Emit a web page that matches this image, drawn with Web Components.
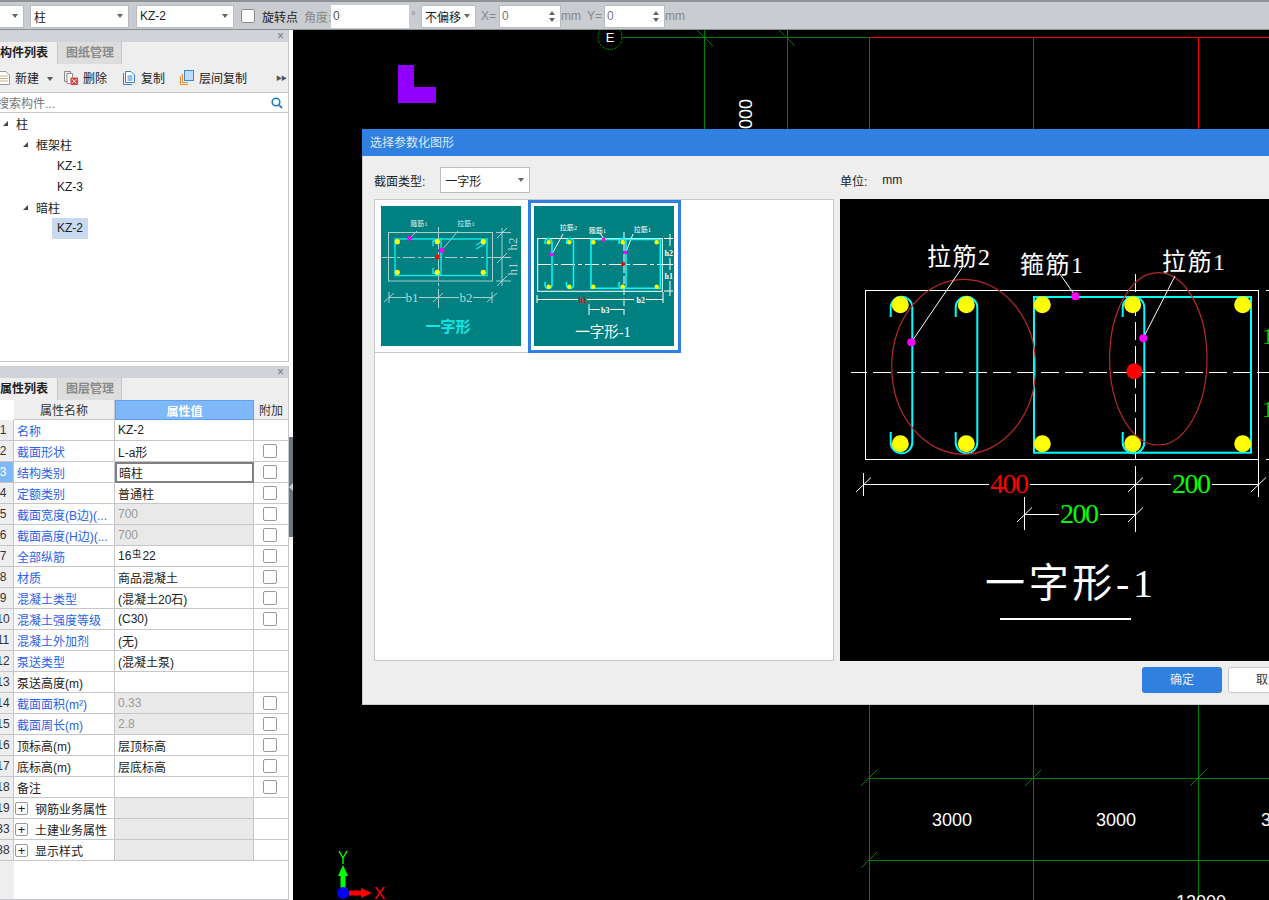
<!DOCTYPE html>
<html lang="zh">
<head>
<meta charset="utf-8">
<title>选择参数化图形</title>
<style>
    html, body {
        margin: 0;
        height: 900px;
        overflow: hidden;
        background: #000;
        font: 12px "Liberation Sans", "Noto Sans CJK SC", sans-serif;
        color: #222;
    }
    cad-app { height: 900px; }
</style>
</head>
<body>
<cad-app></cad-app>

<script>
const FONT = '"Liberation Sans", "Noto Sans CJK SC", sans-serif';
const SERIF = '"Liberation Serif", "Noto Sans CJK SC", serif';

class CadSelect extends HTMLElement {
    constructor() {
        super();
        const shadow = this.attachShadow({mode: 'open'});
        shadow.innerHTML = `
            <style>
                :host {
                    display: flex;
                    align-items: center;
                    justify-content: space-between;
                    box-sizing: border-box;
                    height: 23px;
                    padding: 0 5px 0 3px;
                    background: #fff;
                    border: 1px solid #b9bbbe;
                    font-size: 12px;
                    color: #222;
                }
                i {
                    border: 3px solid transparent;
                    border-top: 4px solid #666;
                    border-bottom: 0;
                }
            </style>
            <span><slot></slot></span><i></i>
        `;
    }
}
customElements.define('cad-select', CadSelect);

class CadSpin extends HTMLElement {
    constructor() {
        super();
        const shadow = this.attachShadow({mode: 'open'});
        shadow.innerHTML = `
            <style>
                :host {
                    display: flex;
                    align-items: center;
                    justify-content: space-between;
                    box-sizing: border-box;
                    height: 23px;
                    padding: 0 5px 0 2px;
                    background: #fff;
                    border: 1px solid #b9bbbe;
                    color: #777;
                }
                div { display: grid; gap: 3px; }
                i { display: block; border: 3px solid transparent; border-top: 0; border-bottom: 4px solid #666; }
                i + i { border-bottom: 0; border-top: 4px solid #666; }
            </style>
            <span><slot></slot></span><div><i></i><i></i></div>
        `;
    }
}
customElements.define('cad-spin', CadSpin);

class TopBar extends HTMLElement {
    constructor() {
        super();
        const shadow = this.attachShadow({mode: 'open'});
        shadow.innerHTML = `
            <style>
                :host {
                    display: flex;
                    align-items: center;
                    box-sizing: border-box;
                    height: 30px;
                    padding-top: 1px;
                    background: #c9ccd1;
                    border-top: 2px solid #8f9297;
                    border-bottom: 1px solid #8a8d91;
                    font-size: 12px;
                    color: #888;
                    overflow: hidden;
                    white-space: nowrap;
                }
                .check {
                    box-sizing: border-box;
                    width: 14px;
                    height: 14px;
                    margin: 0 7px 0 7px;
                    background: #fff;
                    border: 1px solid #8c8c8c;
                    border-radius: 2px;
                }
                .dark { color: #222; }
                .angle {
                    box-sizing: border-box;
                    flex: none;
                    width: 78px;
                    height: 23px;
                    padding: 4px 2px;
                    background: #fff;
                    color: #555;
                }
                .label { flex: none; }
            </style>
            <cad-select style="width:34px;margin-left:-10px"></cad-select>
            <cad-select style="width:99px;margin-left:6px">柱</cad-select>
            <cad-select style="width:98px;margin-left:7px">KZ-2</cad-select>
            <div class="check"></div>
            <span class="dark label" style="width:36px">旋转点</span>
            <span class="label" style="margin-left:6px;width:27px">角度:</span>
            <div class="angle">0</div>
            <span class="label" style="margin-left:2px;width:10px">°</span>
            <cad-select style="width:55px">不偏移</cad-select>
            <span class="label" style="margin-left:5px;width:18px">X=</span>
            <cad-spin style="width:62px">0</cad-spin>
            <span class="label" style="width:26px">mm</span>
            <span class="label" style="width:17px">Y=</span>
            <cad-spin style="width:61px">0</cad-spin>
            <span class="label">mm</span>
        `;
    }
}
customElements.define('top-bar', TopBar);

class SidePanel extends HTMLElement {
    constructor() {
        super();
        const shadow = this.attachShadow({mode: 'open'});
        shadow.innerHTML = `
            <style>
                :host {
                    display: flex;
                    flex-direction: column;
                    box-sizing: border-box;
                    background: #fff;
                    border-right: 1px solid #c4c6c9;
                    border-bottom: 1px solid #c4c6c9;
                    overflow: hidden;
                }
                .head {
                    display: flex;
                    justify-content: flex-end;
                    align-items: center;
                    flex: none;
                    height: 12px;
                    padding-right: 4px;
                    background: #d0d3d8;
                    color: #777;
                    font-size: 12px;
                    line-height: 12px;
                }
                .tabs {
                    display: flex;
                    flex: none;
                    height: 22px;
                    background: #eee;
                    font-weight: bold;
                    line-height: 23px;
                }
                .tabs span { box-sizing: border-box; width: 57px; color: #222; }
                .tabs span + span {
                    width: 65px;
                    padding-left: 8px;
                    background: #ddd;
                    border-left: 1px solid #c8c8c8;
                    border-right: 1px solid #c8c8c8;
                    color: #8a8a8a;
                }
            </style>
            <div class="head">×</div>
            <div class="tabs"><span id="a"></span><span id="b"></span></div>
            <slot></slot>
        `;
        shadow.getElementById('a').textContent = this.getAttribute('first');
        shadow.getElementById('b').textContent = this.getAttribute('second');
    }
}
customElements.define('side-panel', SidePanel);

class PartTools extends HTMLElement {
    constructor() {
        super();
        const shadow = this.attachShadow({mode: 'open'});
        shadow.innerHTML = `
            <style>
                :host {
                    display: flex;
                    align-items: center;
                    flex: none;
                    box-sizing: border-box;
                    height: 29px;
                    padding-bottom: 1px;
                    background: #eee;
                    border-bottom: 1px solid #c8c8c8;
                    color: #222;
                    white-space: nowrap;
                }
                svg { display: block; flex: none; }
                .drop { flex: none; border: 3px solid transparent; border-top: 4px solid #555; border-bottom: 0; margin: 2px 0 0 8px; }
                .more { margin-left: auto; margin-right: 2px; color: #555; font-size: 6px; letter-spacing: -1px; }
            </style>
            <svg width="11" height="14" viewBox="0 0 11 14" style="margin-left:-1px">
                <path d="M0 .5H7L10.5 4V13.5H0Z" fill="#fff" stroke="#999"/>
                <path d="M1 5H9M1 7.5H9M1 10H9" stroke="#c8b27a"/>
            </svg>
            <span style="margin-left:5px">新建</span>
            <i class="drop"></i>
            <svg width="14" height="14" viewBox="0 0 14 14" style="margin-left:11px">
                <path d="M.5 .5H6.5V2.5M.5 .5V10.5H3" fill="none" stroke="#8a8a8a"/>
                <path d="M3 2.5H8.5V6.5M3 2.5V12.5H6" fill="#fff" stroke="#8a8a8a"/>
                <rect x="6.5" y="6.5" width="7.5" height="7.5" fill="#d84a4a"/>
                <path d="M8.3 8.3L12.2 12.2M12.2 8.3L8.3 12.2" stroke="#fff"/>
            </svg>
            <span style="margin-left:5px">删除</span>
            <svg width="12" height="14" viewBox="0 0 12 14" style="margin-left:16px">
                <path d="M.5 2V13.5H9" fill="none" stroke="#3580d0"/>
                <path d="M2.5 .5H8L11.5 4V11.5H2.5Z" fill="#fff" stroke="#3580d0"/>
                <path d="M4.5 5H9.5M4.5 7H9.5M4.5 9H9.5" stroke="#3580d0"/>
            </svg>
            <span style="margin-left:6px">复制</span>
            <svg width="14" height="15" viewBox="0 0 14 15" style="margin-left:15px">
                <path d="M.5 6V14.5H8M2.5 4V12.5H8" fill="none" stroke="#e88a30"/>
                <rect x="4.5" y=".5" width="9" height="10" fill="#bcdcfa" stroke="#3a88d8"/>
            </svg>
            <span style="margin-left:5px">层间复制</span>
            <span class="more">▶▶</span>
        `;
    }
}
customElements.define('part-tools', PartTools);

class PartSearch extends HTMLElement {
    constructor() {
        super();
        const shadow = this.attachShadow({mode: 'open'});
        shadow.innerHTML = `
            <style>
                :host {
                    display: flex;
                    align-items: center;
                    justify-content: space-between;
                    flex: none;
                    box-sizing: border-box;
                    height: 20px;
                    padding-right: 5px;
                    border-bottom: 1px solid #c8c8c8;
                    color: #777;
                    overflow: hidden;
                }
                span { margin-left: -3px; }
            </style>
            <span>搜索构件...</span>
            <svg width="12" height="12" viewBox="0 0 12 12">
                <circle cx="5" cy="5" r="3.8" fill="none" stroke="#1f7fc4" stroke-width="1.6"/>
                <path d="M7.8 7.8L11 11" stroke="#1f7fc4" stroke-width="1.8"/>
            </svg>
        `;
    }
}
customElements.define('part-search', PartSearch);

class PartTree extends HTMLElement {
    constructor() {
        super();
        const shadow = this.attachShadow({mode: 'open'});
        const rows = [
            [0, '柱', true], [1, '框架柱', true], [2, 'KZ-1'], [2, 'KZ-3'],
            [1, '暗柱', true], [2, 'KZ-2', false, true],
        ];
        shadow.innerHTML = `
            <style>
                :host { display: block; flex: 1; color: #222; }
                .row { display: flex; align-items: center; height: 21px; }
                .row i {
                    flex: none;
                    width: 0;
                    height: 0;
                    margin-right: 8px;
                    border-left: 5px solid transparent;
                    border-bottom: 5px solid #444;
                }
                .selected { height: 21px; line-height: 21px; padding: 0 5px; margin-left: -5px; background: #c8d9f0; }
            </style>
            ${rows.map(([depth, name, open, selected]) => `
                <div class="row" style="padding-left:${open ? 3 + depth * 20 : 57}px">
                    ${open ? '<i></i>' : ''}
                    <span class="${selected ? 'selected' : ''}">${name}</span>
                </div>
            `).join('')}
        `;
    }
}
customElements.define('part-tree', PartTree);

class PropTable extends HTMLElement {
    constructor() {
        super();
        const shadow = this.attachShadow({mode: 'open'});
        // no, name, value, flags: b blue, c checkbox, d disabled, s selected, x expander
        const rows = [
            [1, '名称', 'KZ-2', 'b'],
            [2, '截面形状', 'L-a形', 'bc'],
            [3, '结构类别', '暗柱', 'bcs'],
            [4, '定额类别', '普通柱', 'bc'],
            [5, '截面宽度(B边)(...', '700', 'bcd'],
            [6, '截面高度(H边)(...', '700', 'bcd'],
            [7, '全部纵筋', '16<sup>虫</sup>22', 'bc'],
            [8, '材质', '商品混凝土', 'bc'],
            [9, '混凝土类型', '(混凝土20石)', 'bc'],
            [10, '混凝土强度等级', '(C30)', 'bc'],
            [11, '混凝土外加剂', '(无)', 'b'],
            [12, '泵送类型', '(混凝土泵)', 'b'],
            [13, '泵送高度(m)', '', ''],
            [14, '截面面积(m²)', '0.33', 'bcd'],
            [15, '截面周长(m)', '2.8', 'bcd'],
            [16, '顶标高(m)', '层顶标高', 'c'],
            [17, '底标高(m)', '层底标高', 'c'],
            [18, '备注', '', 'c'],
            [19, '钢筋业务属性', '', 'dx'],
            [33, '土建业务属性', '', 'dx'],
            [38, '显示样式', '', 'dx'],
        ];
        shadow.innerHTML = `
            <style>
                :host {
                    display: grid;
                    grid-template-columns: 14px 101px 139px 34px;
                    grid-template-rows: 20px;
                    grid-auto-rows: 21px;
                    align-content: start;
                    flex: 1;
                    background: linear-gradient(#eee, #eee) left / 14px 100% no-repeat #fff;
                    color: #222;
                }
                div {
                    display: flex;
                    align-items: center;
                    box-sizing: border-box;
                    min-width: 0;
                    border-bottom: 1px solid #c4c6c9;
                    border-right: 1px solid #c4c6c9;
                    white-space: nowrap;
                    overflow: hidden;
                }
                .no { background: #eee; color: #333; }
                .no span { flex: none; width: 14px; margin-left: -4px; text-align: center; }
                .name { padding-left: 3px; }
                .blue { color: #2a62e8; }
                .val { padding-left: 3px; }
                .off { background: #e9e9e9; color: #999; }
                .sel { border: 2px solid #808080; padding-left: 2px; }
                .on { background: #7fb8f8; color: #fff; }
                .extra { justify-content: center; border-right: 0; padding-right: 2px; }
                .head { justify-content: center; background: #eee; color: #333; }
                .head.val { padding: 0; background: #7fb8f8; border: 1px solid #5ea3f0; color: #fff; font-weight: bold; }
                .corner { background: #fff; border-right-color: transparent; border-bottom-color: transparent; }
                b {
                    display: block;
                    box-sizing: border-box;
                    width: 14px;
                    height: 14px;
                    border: 1px solid #999;
                    border-radius: 2px;
                    background: #fff;
                }
                .plus {
                    flex: none;
                    width: 13px;
                    height: 13px;
                    margin-right: 7px;
                    margin-left: -2px;
                    text-align: center;
                    line-height: 11px;
                    font-weight: normal;
                    font-size: 13px;
                    color: #222;
                }
                sup { font-size: 9px; line-height: 0; vertical-align: 3px; margin: 0 1px; }
            </style>
            <div class="head corner"></div>
            <div class="head">属性名称</div>
            <div class="head val">属性值</div>
            <div class="head extra" style="padding:0">附加</div>
            ${rows.map(([no, name, value, flags]) => `
                <div class="no ${flags.includes('s') ? 'on' : ''}"><span>${no}</span></div>
                <div class="name ${flags.includes('b') ? 'blue' : ''}">${flags.includes('x') ? '<b class="plus">+</b>' : ''}${name}</div>
                <div class="val ${flags.includes('d') ? 'off' : ''} ${flags.includes('s') ? 'sel' : ''}"><span>${value}</span></div>
                <div class="extra">${flags.includes('c') ? '<b></b>' : ''}</div>
            `).join('')}
        `;
    }
}
customElements.define('prop-table', PropTable);

class SideBar extends HTMLElement {
    constructor() {
        super();
        const shadow = this.attachShadow({mode: 'open'});
        shadow.innerHTML = `
            <style>
                :host {
                    display: grid;
                    grid-template-rows: 332px 534px;
                    row-gap: 4px;
                    position: relative;
                    flex: none;
                    box-sizing: border-box;
                    width: 293px;
                    padding-right: 4px;
                    background: #fff;
                }
                .grip {
                    position: absolute;
                    left: 289px;
                    top: 407px;
                    width: 4px;
                    height: 100px;
                    background: #6b7480;
                }
                .grip::after {
                    content: "";
                    position: absolute;
                    top: 46px;
                    left: 0;
                    border: 4px solid transparent;
                    border-left: 0;
                    border-right: 4px solid #ccd0d5;
                }
            </style>
            <side-panel first="构件列表" second="图纸管理">
                <part-tools></part-tools>
                <part-search></part-search>
                <part-tree></part-tree>
            </side-panel>
            <side-panel first="属性列表" second="图层管理">
                <prop-table></prop-table>
            </side-panel>
            <div class="grip"></div>
        `;
    }
}
customElements.define('side-bar', SideBar);

class DrawCanvas extends HTMLElement {
    constructor() {
        super();
        const shadow = this.attachShadow({mode: 'open'});
        const tick = (x, y) => `<path d="M${x - 8} ${y + 8}L${x + 8} ${y - 8}"/>`;
        shadow.innerHTML = `
            <style>
                :host { display: block; position: relative; flex: 1; min-width: 0; background: #000; overflow: hidden; }
                svg { display: block; position: absolute; left: 0; top: 0; }
                text { font-family: ${FONT}; }
            </style>
            <svg width="976" height="870" viewBox="293 30 976 870">
                <g stroke="#008000" fill="none" shape-rendering="crispEdges">
                    <path d="M622 37.5H869M704.5 30V130M787.5 30V130"/>
                    <path d="M869.5 705V900M1033.5 705V900M1198.5 705V900M869 778.5H1269M869 860.5H1269"/>
                </g>
                <g stroke="#008000" fill="none">
                    <ellipse cx="610" cy="37" rx="12" ry="12.5" stroke-dasharray="3 1"/>
                    <path d="M697 30L713 46M779 30L795 46"/>
                    ${tick(869, 778)}${tick(1033, 778)}${tick(1198, 778)}${tick(869, 860)}
                </g>
                <g stroke="#f00" fill="none" shape-rendering="crispEdges">
                    <path d="M869 37.5H1269M869.5 37V130M1033.5 37V130M1198.5 37V130"/>
                </g>
                <path d="M398 65H414V87H436V103H398Z" fill="#8f00ff"/>
                <g fill="#fff">
                    <text x="610" y="42" font-size="13" text-anchor="middle">E</text>
                    <text x="932" y="826" font-size="18">3000</text>
                    <text x="1096" y="826" font-size="18">3000</text>
                    <text x="1261" y="826" font-size="18">3000</text>
                    <text x="1176" y="908" font-size="18">12000</text>
                    <text transform="translate(752 129) rotate(-90)" font-size="18">000</text>
                </g>
                <path d="M343 893V875" stroke="#0f0" stroke-width="5"/>
                <path d="M343 865L348 876H338Z" fill="#0f0"/>
                <path d="M349 893H363" stroke="#f00" stroke-width="5"/>
                <path d="M372 893L361 888V898Z" fill="#f00"/>
                <circle cx="343" cy="893" r="6" fill="#00f"/>
                <path d="M339 851L343 858L347 851M343 858V864" stroke="#0f0" stroke-width="1.4" fill="none"/>
                <text x="374" y="899" font-size="17" fill="#f00">X</text>
            </svg>
            <slot></slot>
        `;
    }
}
customElements.define('draw-canvas', DrawCanvas);

class SectionTile extends HTMLElement {
    constructor() {
        super();
        const shadow = this.attachShadow({mode: 'open'});
        const selected = this.hasAttribute('selected');
        shadow.innerHTML = `
            <style>
                :host {
                    display: block;
                    box-sizing: border-box;
                    flex: none;
                    width: 153px;
                    height: 153px;
                    padding: 6px 7px 6px 6px;
                    border-bottom: 1px solid #c8c8c8;
                }
                :host([selected]) {
                    padding: 3px;
                    border: 3px solid #2f80e0;
                }
                .pic { display: block; width: 140px; height: 140px; background: #008080; }
                svg text { font-family: ${SERIF}; }
            </style>
            <svg class="pic" viewBox="0 0 140 140">${selected ? SectionTile.second : SectionTile.first}</svg>
        `;
    }
}
SectionTile.first = `
    <g stroke="#a9cfcf" fill="none" stroke-width="1">
        <rect x="7.5" y="26.5" width="104" height="48.5"/>
        <path d="M1 51.5H121" stroke-dasharray="12 3 3 3"/>
        <path d="M57.5 21V102" stroke-dasharray="22 3 3 3"/>
        <path d="M115 26.5H130M115 51.5H130M115 75H130M121 22V80"/>
        <path d="M116 32L126 22M116 57L126 47M116 80L126 70"/>
        <path d="M8 86V97M57.5 86V97M111 86V97M8 91.5H25M38 91.5H78M92 91.5H111"/>
        <path d="M3 96L13 87M52 96L62 87M106 96L116 87"/>
        <path d="M29 32L36 25M61 44L77 25"/>
    </g>
    <g stroke="#18e8e8" fill="none" stroke-width="1.4">
        <rect x="14" y="33" width="92" height="36.5"/>
        <path d="M52 40V35L60 33V69L52 67V62"/>
        <path d="M95 39L104 34M95 43L104 38"/>
    </g>
    <g fill="#ff0">
        <circle cx="16.3" cy="35.7" r="2.6"/><circle cx="56.3" cy="35.7" r="2.6"/><circle cx="102.3" cy="35.7" r="2.6"/>
        <circle cx="16.3" cy="66.3" r="2.6"/><circle cx="56.3" cy="66.3" r="2.6"/><circle cx="102.3" cy="66.3" r="2.6"/>
    </g>
    <circle cx="28.7" cy="32.3" r="2.5" fill="#f0f"/>
    <circle cx="61" cy="44.3" r="2.5" fill="#f0f"/>
    <circle cx="56.3" cy="51" r="2.5" fill="#f00"/>
    <g fill="#d8ecec" font-size="7" text-anchor="middle">
        <text x="38" y="20">箍筋1</text>
        <text x="85" y="20">拉筋1</text>
    </g>
    <g fill="#b8d8d8" font-size="13" text-anchor="middle">
        <text x="31" y="96">b1</text>
        <text x="85" y="96">b2</text>
        <text transform="translate(136 38) rotate(-90)">h2</text>
        <text transform="translate(136 63) rotate(-90)">h1</text>
    </g>
    <text x="67" y="126" fill="#14e6e6" font-size="15" font-weight="bold" text-anchor="middle">一字形</text>
`;
SectionTile.second = `
    <g stroke="#fff" fill="none" stroke-width="1">
        <rect x="3.7" y="32.5" width="124.6" height="52.8"/>
        <path d="M3 58.5H130" stroke-dasharray="14 3 4 3"/>
        <path d="M90 26V109" stroke-dasharray="8 3"/>
        <path d="M3 93.5H44M53 93.5H100M112 93.5H129M3 89V97M129 86V97"/>
        <path d="M55 103.5H66M76 103.5H90M55 98V109"/>
        <path d="M130 32.5H139M130 58.5H139M130 85H139M136 28V40M136 52V64M136 75V90"/>
        <path d="M18 48L29 28M70 33L66 27M92 46L99 28"/>
    </g>
    <g stroke="#00ffff" fill="none" stroke-width="1.5">
        <rect x="57" y="33.5" width="69.3" height="48.8"/>
        <path d="M11 38V36A3.5 3.5 0 0 1 18 36V79A3.5 3.5 0 0 1 11 79V76"/>
        <path d="M32.5 38V36A3.5 3.5 0 0 1 39.5 36V79A3.5 3.5 0 0 1 32.5 79V76"/>
        <path d="M85 38V36A3.5 3.5 0 0 1 92 36V79A3.5 3.5 0 0 1 85 79V76"/>
    </g>
    <g fill="#ff0">
        <circle cx="14.7" cy="36.3" r="2.2"/><circle cx="35.3" cy="36.3" r="2.2"/><circle cx="59.3" cy="36.3" r="2.2"/><circle cx="88.7" cy="36.3" r="2.2"/><circle cx="122.7" cy="36.3" r="2.2"/>
        <circle cx="14.7" cy="80.7" r="2.2"/><circle cx="35.3" cy="80.7" r="2.2"/><circle cx="59.3" cy="80.7" r="2.2"/><circle cx="88.7" cy="80.7" r="2.2"/><circle cx="122.7" cy="80.7" r="2.2"/>
    </g>
    <g fill="#f0f">
        <rect x="16" y="47" width="3" height="3"/><rect x="68" y="32" width="3" height="3"/><rect x="90" y="45" width="3" height="3"/>
    </g>
    <circle cx="89" cy="58" r="2" fill="#f00"/>
    <g fill="#fff" font-size="7" text-anchor="middle">
        <text x="34.5" y="24">拉筋2</text>
        <text x="63.5" y="27">箍筋1</text>
        <text x="108.5" y="26">拉筋1</text>
    </g>
    <g fill="#fff" font-size="8" font-weight="bold" text-anchor="middle">
        <text x="48.7" y="96.5" fill="#f00">b1</text>
        <text x="106.7" y="96.5">b2</text>
        <text x="71.3" y="106.5">b3</text>
        <text x="134.7" y="49.5">h2</text>
        <text x="134.7" y="72.5">h1</text>
    </g>
    <text x="69" y="130.5" fill="#fff" font-size="14.5" text-anchor="middle">一字形-1</text>
`;
customElements.define('section-tile', SectionTile);

class SectionPreview extends HTMLElement {
    constructor() {
        super();
        const shadow = this.attachShadow({mode: 'open'});
        const bars = [890.7, 955.7, 1122.7].map(x =>
            `<path d="M${x} 317V307.5A10.8 10.8 0 0 1 ${x + 21.6} 307.5V442.5A10.8 10.8 0 0 1 ${x} 442.5V432"/>`
        ).join('');
        const dots = [900.3, 966.3, 1042.3, 1132.7, 1242.7].map(x =>
            `<circle cx="${x}" cy="304.7" r="8.5"/><circle cx="${x}" cy="443.7" r="8.5"/>`
        ).join('');
        const tick = (x, y) => `<path d="M${x - 7.5} ${y + 8}L${x + 7.5} ${y - 6.5}"/>`;
        shadow.innerHTML = `
            <style>
                :host { display: block; height: 462px; background: #000; overflow: hidden; }
                svg { display: block; }
                text { font-family: ${SERIF}; }
            </style>
            <svg width="472" height="462" viewBox="840 199 472 462">
                <g stroke="#fff" fill="none">
                    <rect x="865.5" y="290.5" width="393" height="169" shape-rendering="crispEdges"/>
                    <path d="M851 372.5H1269" stroke-dasharray="18 6" stroke-dashoffset="2" shape-rendering="crispEdges"/>
                    <path d="M1135.5 274V466" stroke-dasharray="18 6" shape-rendering="crispEdges"/>
                    <path d="M1266 290.5H1269M1266 459.5H1269" shape-rendering="crispEdges"/>
                    <g shape-rendering="crispEdges">
                        <path d="M863.5 473V496M1135.5 466V532M1258.5 459V497M1024.5 497V530"/>
                        <path d="M863 484.5H989M1030 484.5H1171M1212 484.5H1258M1024 514.5H1059M1100 514.5H1135"/>
                    </g>
                    ${tick(863.5, 484)}${tick(1135.5, 484)}${tick(1258.5, 484)}${tick(1024.5, 514)}${tick(1135.5, 514)}
                </g>
                <g stroke="#0ff" stroke-width="2" fill="none">
                    <rect x="1034" y="297" width="217" height="155.7"/>
                    ${bars}
                </g>
                <g fill="#ff0">${dots}</g>
                <g stroke="#b82a2a" fill="none" stroke-width="1.2">
                    <ellipse cx="963.7" cy="366.8" rx="72" ry="87.5"/>
                    <ellipse cx="1158.3" cy="358.8" rx="48.7" ry="86.2"/>
                </g>
                <g stroke="#fff" fill="none">
                    <path d="M962 267.7L911.3 342.3M1060 274L1075.3 296M1175 276L1143.3 338"/>
                </g>
                <g fill="#f0f">
                    <circle cx="911.3" cy="342.3" r="4"/>
                    <circle cx="1075.3" cy="296.3" r="4"/>
                    <circle cx="1143.3" cy="338.3" r="4"/>
                </g>
                <circle cx="1134.3" cy="371.3" r="8" fill="#f00"/>
                <g fill="#fff" font-size="24">
                    <text x="927" y="265" textLength="63">拉筋2</text>
                    <text x="1020" y="273" textLength="63">箍筋1</text>
                    <text x="1162" y="270" textLength="63">拉筋1</text>
                </g>
                <g font-size="28">
                    <text x="990" y="493" fill="#f00" textLength="39">400</text>
                    <text x="1172" y="493" fill="#0f0" textLength="39">200</text>
                    <text x="1060" y="523" fill="#0f0" textLength="39">200</text>
                </g>
                <g fill="#0c0" font-size="24">
                    <text x="1262" y="344">1</text>
                    <text x="1262" y="417">1</text>
                </g>
                <text x="985" y="597" fill="#fff" font-size="40" textLength="168">一字形-1</text>
                <path d="M1000 619H1131" stroke="#fff" stroke-width="2"/>
            </svg>
        `;
    }
}
customElements.define('section-preview', SectionPreview);

class ParamDialog extends HTMLElement {
    constructor() {
        super();
        const shadow = this.attachShadow({mode: 'open'});
        shadow.innerHTML = `
            <style>
                :host {
                    display: block;
                    position: absolute;
                    left: 69px;
                    top: 99px;
                    box-sizing: border-box;
                    width: 962px;
                    height: 576px;
                    background: #eee;
                    border: 1px solid #c9cdd4;
                    border-top: 0;
                    color: #222;
                }
                .title {
                    box-sizing: border-box;
                    height: 27px;
                    margin: 0 -1px;
                    padding: 1px 8px 0;
                    background: #2f80e0;
                    color: #dfeaf8;
                    line-height: 27px;
                }
                .body {
                    display: grid;
                    grid-template-columns: 460px 472px;
                    grid-template-rows: 43px 462px;
                    column-gap: 6px;
                    padding-left: 11px;
                }
                .line { display: flex; align-items: center; box-sizing: border-box; padding-top: 5px; }
                .kind { width: 90px; height: 26px; margin-left: 15px; padding-left: 4px; }
                .list {
                    display: flex;
                    align-items: flex-start;
                    box-sizing: border-box;
                    background: #fff;
                    border: 1px solid #c8c8c8;
                }
                .foot {
                    display: flex;
                    justify-content: flex-end;
                    gap: 6px;
                    padding: 6px 15px 0 0;
                }
                .btn {
                    box-sizing: border-box;
                    width: 80px;
                    height: 26px;
                    text-align: center;
                    line-height: 26px;
                    background: #2f80e0;
                    border-radius: 3px;
                    color: #e8f0fb;
                }
                .btn + .btn { background: #fff; border: 1px solid #c5cad3; color: #333; line-height: 24px; }
            </style>
            <div class="title">选择参数化图形</div>
            <div class="body">
                <div class="line">截面类型:<cad-select class="kind">一字形</cad-select></div>
                <div class="line"><span style="margin-right:15px">单位:</span>mm</div>
                <div class="list">
                    <section-tile></section-tile>
                    <section-tile selected></section-tile>
                </div>
                <section-preview></section-preview>
            </div>
            <div class="foot">
                <div class="btn">确定</div>
                <div class="btn">取消</div>
            </div>
        `;
    }
}
customElements.define('param-dialog', ParamDialog);

class CadApp extends HTMLElement {
    constructor() {
        super();
        const shadow = this.attachShadow({mode: 'open'});
        shadow.innerHTML = `
            <style>
                :host { display: flex; flex-direction: column; }
                .main { display: flex; flex: 1; min-height: 0; }
            </style>
            <top-bar></top-bar>
            <div class="main">
                <side-bar></side-bar>
                <draw-canvas><param-dialog></param-dialog></draw-canvas>
            </div>
        `;
    }
}
customElements.define('cad-app', CadApp);
</script>
</body>
</html>
